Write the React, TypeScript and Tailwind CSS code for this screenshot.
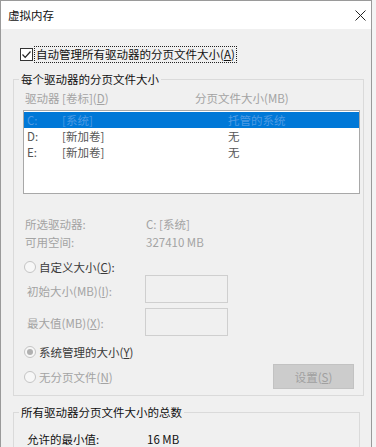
import React from "react";

const font = { fontFamily: '"Noto Sans CJK SC", "Noto Sans", sans-serif' };

function Radio({ checked, label, dark }: { checked?: boolean; label: React.ReactNode; dark?: boolean }) {
  return (
    <div className="flex items-center">
      <span className="w-[12px] h-[12px] rounded-full border border-[#c4c4c4] bg-[#f7f7f7] flex items-center justify-center">
        {checked && <span className="w-[6px] h-[6px] rounded-full bg-[#b0b0b0]" />}
      </span>
      <span className={`ml-[3px] ${dark ? "text-[#3a3a3a]" : "text-[#a3a3a3]"}`}>{label}</span>
    </div>
  );
}

export default function App() {
  return (
    <div style={font} className="w-[376px] h-[447px] overflow-hidden bg-[#f4f4f4] text-[11.5px] leading-[14px]">
      <div className="w-[372px] h-[460px] border-l border-r border-t border-[#9a9a9a] bg-[#f0f0f0]">
        {/* title bar */}
        <div className="h-[28px] bg-white flex items-center justify-between pl-[7px] pr-[4px]">
          <span className="text-[#111]">虚拟内存</span>
          <svg width="11" height="11" viewBox="0 0 11 11" className="mr-[1px]">
            <path d="M0.5 0.5 L10.5 10.5 M10.5 0.5 L0.5 10.5" stroke="#222" strokeWidth="1" />
          </svg>
        </div>
        {/* body */}
        <div className="pl-[12px] pr-[4px]">
          {/* checkbox row */}
          <div className="mt-[17px] h-[17px] flex items-center pl-[7px]">
            <span className="w-[13px] h-[13px] border border-[#333] bg-white flex items-center justify-center">
              <svg width="11" height="11" viewBox="0 0 11 11">
                <path d="M1.5 5.5 L4.2 8.3 L9.5 2.5" stroke="#222" strokeWidth="1.2" fill="none" />
              </svg>
            </span>
            <span className="ml-[1px] border border-dotted border-[#222] px-[1px] text-[#111] leading-[15px]">
              自动管理所有驱动器的分页文件大小(<span className="underline">A</span>)
            </span>
          </div>

          {/* group 1 */}
          <fieldset className="mt-[9px] border border-[#dadada] pb-[6px] mr-[3px]">
            <legend className="ml-[5px] px-[2px] text-[#111] leading-[14px]">每个驱动器的分页文件大小</legend>
            <div className="mt-[5px] flex text-[#a3a3a3] pl-[11px]">
              <span className="w-[170px]">驱动器 [卷标](<span className="underline">D</span>)</span>
              <span>分页文件大小(MB)</span>
            </div>
            <div className="mt-[5px] ml-[9px] mr-[3px] h-[84px] border border-[#a8a8a8] bg-white pt-[1px]">
              <div className="h-[16px] bg-[#0078d7] flex items-center text-[#4f9be4] pl-[3px]">
                <span className="w-[35px]">C:</span>
                <span className="w-[166px]">[系统]</span>
                <span>托管的系统</span>
              </div>
              <div className="h-[16px] flex items-center text-[#555] pl-[3px]">
                <span className="w-[35px]">D:</span>
                <span className="w-[166px]">[新加卷]</span>
                <span>无</span>
              </div>
              <div className="h-[16px] flex items-center text-[#555] pl-[3px]">
                <span className="w-[35px]">E:</span>
                <span className="w-[166px]">[新加卷]</span>
                <span>无</span>
              </div>
            </div>

            <div className="mt-[21px] pl-[11px] text-[#a3a3a3]">
              <div className="h-[18px] flex items-center">
                <span className="w-[121px]">所选驱动器:</span>
                <span>C:&nbsp;[系统]</span>
              </div>
              <div className="h-[18px] flex items-center">
                <span className="w-[121px]">可用空间:</span>
                <span>327410 MB</span>
              </div>
            </div>

            <div className="mt-[7px] h-[17px] pl-[10px] flex items-center">
              <Radio dark label={<>自定义大小(<span className="underline">C</span>):</>} />
            </div>
            <div className="h-[28px] flex items-center pl-[13px] text-[#a3a3a3]">
              <span className="w-[118px] mt-[3px]">初始大小(MB)(<span className="underline">I</span>):</span>
              <span className="w-[83px] h-[28px] border border-[#cfcfcf] bg-[#f0f0f0]" />
            </div>
            <div className="mt-[5px] h-[28px] flex items-center pl-[13px] text-[#a3a3a3]">
              <span className="w-[118px] mt-[2px]">最大值(MB)(<span className="underline">X</span>):</span>
              <span className="w-[83px] h-[28px] border border-[#cfcfcf] bg-[#f0f0f0]" />
            </div>
            <div className="mt-[7px] h-[18px] pl-[10px] flex items-center">
              <Radio dark checked label={<>系统管理的大小(<span className="underline">Y</span>)</>} />
            </div>
            <div className="mt-[3px] h-[25px] pl-[10px] flex items-center justify-between pr-[9px]">
              <Radio label={<>无分页文件(<span className="underline">N</span>)</>} />
              <div className="w-[81px] h-[25px] bg-[#cccccc] border border-[#c2c2c2] flex items-center justify-center text-[#a0a0a0]">
                设置(<span className="underline">S</span>)
              </div>
            </div>
          </fieldset>

          {/* group 2 */}
          <fieldset className="mt-[9px] border border-[#dadada] mr-[7px] h-[60px]">
            <legend className="ml-[5px] px-[2px] text-[#111] leading-[14px]">所有驱动器分页文件大小的总数</legend>
            <div className="mt-[12px] h-[16px] flex items-center pl-[13px] text-[#111]">
              <span className="w-[120px]">允许的最小值:</span>
              <span>16 MB</span>
            </div>
          </fieldset>
        </div>
      </div>
    </div>
  );
}
